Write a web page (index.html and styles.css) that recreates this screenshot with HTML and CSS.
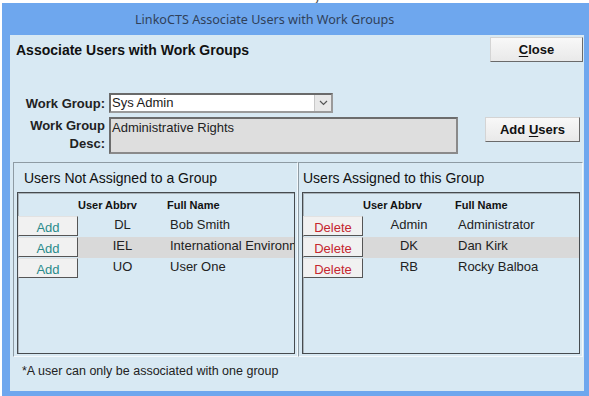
FILE: index.html
```html
<!DOCTYPE html>
<html lang="en">
<head>
    <meta charset="UTF-8">
    <title>LinkoCTS Associate Users with Work Groups</title>
    <link rel="stylesheet" href="styles.css">
</head>
<body>

    <div class="backdrop"><span>LinkoCTS Security Administration</span></div>

    <div class="window">
        <div class="titlebar">LinkoCTS Associate Users with Work Groups</div>

        <div class="client">
            <div class="top-row">
                <h1>Associate Users with Work Groups</h1>
                <button class="btn btn-close"><u>C</u>lose</button>
            </div>

            <div class="settings">
                <label class="field-label">Work Group:</label>
                <div class="select">
                    <span class="select-value">Sys Admin</span>
                    <span class="select-arrow">
                        <svg width="9" height="6" viewBox="0 0 9 6"><path d="M1 1 L4.5 4.5 L8 1" fill="none" stroke="#555" stroke-width="1.2"/></svg>
                    </span>
                </div>
                <span></span>

                <label class="field-label two-line">Work Group<br>Desc:</label>
                <div class="desc">Administrative Rights</div>
                <button class="btn btn-add-users">Add <u>U</u>sers</button>
            </div>

            <div class="panels">
                <div class="panel">
                    <h2>Users Not Assigned to a Group</h2>
                    <div class="list">
                        <div class="list-head">
                            <span></span>
                            <span>User Abbrv</span>
                            <span>Full Name</span>
                        </div>
                        <div class="row">
                            <button class="row-btn add">Add</button>
                            <span class="cell abbrv">DL</span>
                            <span class="cell name">Bob Smith</span>
                        </div>
                        <div class="row alt">
                            <button class="row-btn add">Add</button>
                            <span class="cell abbrv">IEL</span>
                            <span class="cell name">International Environmental Labs</span>
                        </div>
                        <div class="row">
                            <button class="row-btn add">Add</button>
                            <span class="cell abbrv">UO</span>
                            <span class="cell name">User One</span>
                        </div>
                    </div>
                </div>

                <div class="panel panel-right">
                    <h2>Users Assigned to this Group</h2>
                    <div class="list list-right">
                        <div class="list-head">
                            <span></span>
                            <span>User Abbrv</span>
                            <span>Full Name</span>
                        </div>
                        <div class="row">
                            <button class="row-btn delete">Delete</button>
                            <span class="cell abbrv">Admin</span>
                            <span class="cell name">Administrator</span>
                        </div>
                        <div class="row alt">
                            <button class="row-btn delete">Delete</button>
                            <span class="cell abbrv">DK</span>
                            <span class="cell name">Dan Kirk</span>
                        </div>
                        <div class="row">
                            <button class="row-btn delete">Delete</button>
                            <span class="cell abbrv">RB</span>
                            <span class="cell name">Rocky Balboa</span>
                        </div>
                    </div>
                </div>
            </div>

            <p class="note">*A user can only be associated with one group</p>
        </div>
    </div>

</body>
</html>
```

FILE: styles.css
```css
body {
    margin: 0;
    width: 589px;
    height: 396px;
    overflow: hidden;
    background-color: #fff;
    font-family: "Liberation Sans", Arial, sans-serif;
    color: #1a1a1a;
}

/* window behind, only the bottom of its title shows */
.backdrop {
    height: 3px;
    overflow: hidden;
    padding-left: 205px;
    font-family: "Noto Sans", sans-serif;
    font-size: 14px;
    color: #555;
}

    .backdrop span {
        display: block;
        line-height: 14px;
        margin-top: -12px;
    }

.window {
    margin-left: 2px;
    width: 592px;
    box-sizing: border-box;
    padding: 0 0 5px 8px;
    background-color: #6ea7ee;
}

.titlebar {
    height: 32px;
    display: flex;
    align-items: center;
    padding-left: 125px;
    font-family: "Noto Sans", sans-serif;
    font-size: 12.6px;
    color: #30415a;
}

.client {
    width: 574px;
    height: 356px;
    box-sizing: border-box;
    background-color: #d8e9f3;
    overflow: hidden;
}

.top-row {
    display: flex;
    justify-content: space-between;
    align-items: center;
    height: 25px;
    margin-top: 2px;
    padding-left: 6px;
    padding-right: 1px;
}

h1 {
    margin: 0;
    font-size: 14px;
    font-weight: bold;
    color: #111;
    transform: scaleY(1.06);
}

.btn {
    font-family: "Liberation Sans", Arial, sans-serif;
    font-size: 13px;
    font-weight: bold;
    color: #111;
    background: linear-gradient(#f8f8f8, #e9e9e9);
    border: 1px solid #d4d4d4;
    border-right-color: #6a6a6a;
    border-bottom-color: #6a6a6a;
    padding: 0;
    cursor: pointer;
}

    .btn u {
        text-underline-offset: 2px;
    }

.btn-close {
    width: 93px;
    height: 25px;
}

.settings {
    display: grid;
    grid-template-columns: 83px 349px 1fr;
    column-gap: 4px;
    row-gap: 4px;
    margin-top: 31px;
    padding-left: 12px;
    padding-right: 4px;
}

.field-label {
    text-align: right;
    font-size: 13px;
    font-weight: bold;
    color: #222;
    align-self: center;
}

    .field-label.two-line {
        align-self: start;
        line-height: 18px;
    }

.select {
    width: 224px;
    height: 20px;
    box-sizing: border-box;
    display: flex;
    background-color: #fff;
    border: 2px solid #6a6a6a;
    border-right-color: #9a9a9a;
    border-bottom-color: #9a9a9a;
}

.select-value {
    flex: 1;
    padding-left: 1px;
    font-size: 13px;
    line-height: 16px;
}

.select-arrow {
    width: 16px;
    display: flex;
    align-items: center;
    justify-content: center;
    background-color: #e8e8e8;
    border-left: 1px solid #c8c8c8;
}

.desc {
    height: 37px;
    box-sizing: border-box;
    padding: 1px 1px;
    background-color: #dedede;
    border: 2px solid #6c6c6c;
    border-right-color: #8a8a8a;
    border-bottom-color: #8a8a8a;
    font-size: 13px;
    color: #222;
}

.btn-add-users {
    width: 95px;
    height: 25px;
    justify-self: end;
}

.panels {
    display: flex;
    margin-top: 8px;
    margin-left: 3px;
}

.panel {
    width: 285px;
    height: 195px;
    box-sizing: border-box;
    display: flex;
    flex-direction: column;
    padding: 0 2px 2px 3px;
    border: 1px solid;
    border-color: #8e9ba3 #f4f9fc #f4f9fc #8e9ba3;
}

    .panel h2 {
        margin: 0;
        height: 29px;
        line-height: 30px;
        padding-left: 7px;
        font-size: 14px;
        font-weight: normal;
        color: #111;
    }

    .panel-right h2 {
        padding-left: 1px;
    }

.list {
    flex: 1;
    overflow: hidden;
    border: 1px solid #464b4f;
    box-shadow: inset 1px 1px 0 #a9b3b9;
}

.list-head,
.row {
    display: grid;
    grid-template-columns: 60px 89px 1fr;
}

.list-right .list-head,
.list-right .row {
    grid-template-columns: 60px 92px 1fr;
}

.list-head {
    height: 23px;
    align-items: center;
    font-size: 11px;
    font-weight: bold;
    color: #111;
}

.row {
    height: 21px;
}

.row-btn {
    height: 20px;
    padding: 2px 0 0;
    font-family: "Liberation Sans", Arial, sans-serif;
    font-size: 13px;
    background-color: #f1f1f1;
    border: 1px solid #e2e2e2;
    border-right-color: #555;
    border-bottom-color: #555;
    cursor: pointer;
}

    .row-btn.add {
        color: #2a8b8b;
    }

    .row-btn.delete {
        color: #c5262f;
    }

.cell {
    font-size: 13px;
    line-height: 15px;
    padding-top: 1px;
    color: #222;
    white-space: nowrap;
    overflow: hidden;
}

.abbrv {
    text-align: center;
}

.name {
    padding-left: 3px;
}

.row.alt .cell {
    background-color: #d9d9d9;
}

.note {
    margin: 6px 0 0;
    padding-left: 12px;
    font-size: 12.5px;
    line-height: 16px;
    color: #222;
}
```
